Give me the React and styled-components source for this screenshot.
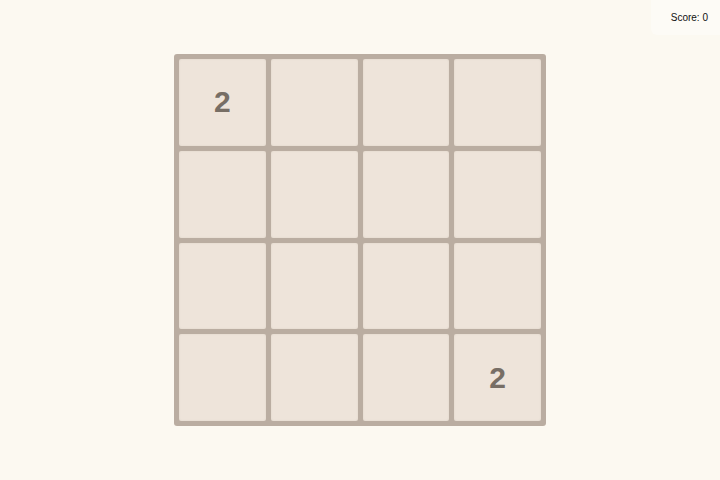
import React from "react";
import styled, { createGlobalStyle } from "styled-components";

const GlobalStyle = createGlobalStyle`
  html, body {
    margin: 0;
    padding: 0;
    height: 100%;
    background: #fcf9f1;
    font-family: "Liberation Sans", Arial, sans-serif;
  }
  #root {
    height: 100%;
  }
`;

const Page = styled.div`
  position: relative;
  width: 720px;
  height: 480px;
  display: flex;
  align-items: center;
  justify-content: center;
`;

const Score = styled.div`
  position: absolute;
  top: 0;
  right: 0;
  font-size: 10px;
  color: #111;
  padding: 12px 12px 12px 20px;
  background: rgba(255, 255, 255, 0.35);
  border-bottom-left-radius: 6px;
`;

const Board = styled.div`
  width: 372px;
  height: 372px;
  box-sizing: border-box;
  padding: 5px;
  background: #baada1;
  border-radius: 3px;
  display: grid;
  grid-template-columns: repeat(4, 1fr);
  grid-template-rows: repeat(4, 1fr);
  gap: 5px;
`;

const Tile = styled.div`
  background: #eee4da;
  border-radius: 2px;
  box-shadow: inset 0 0 2px rgba(190, 175, 160, 0.35);
  display: flex;
  align-items: center;
  justify-content: center;
  font-size: 30px;
  font-weight: bold;
  color: #776e65;
`;

const cells = [
  2, 0, 0, 0,
  0, 0, 0, 0,
  0, 0, 0, 0,
  0, 0, 0, 2,
];

export default function App() {
  return (
    <Page>
      <GlobalStyle />
      <Score>Score: 0</Score>
      <Board>
        {cells.map((v, i) => (
          <Tile key={i}>{v ? v : ""}</Tile>
        ))}
      </Board>
    </Page>
  );
}
